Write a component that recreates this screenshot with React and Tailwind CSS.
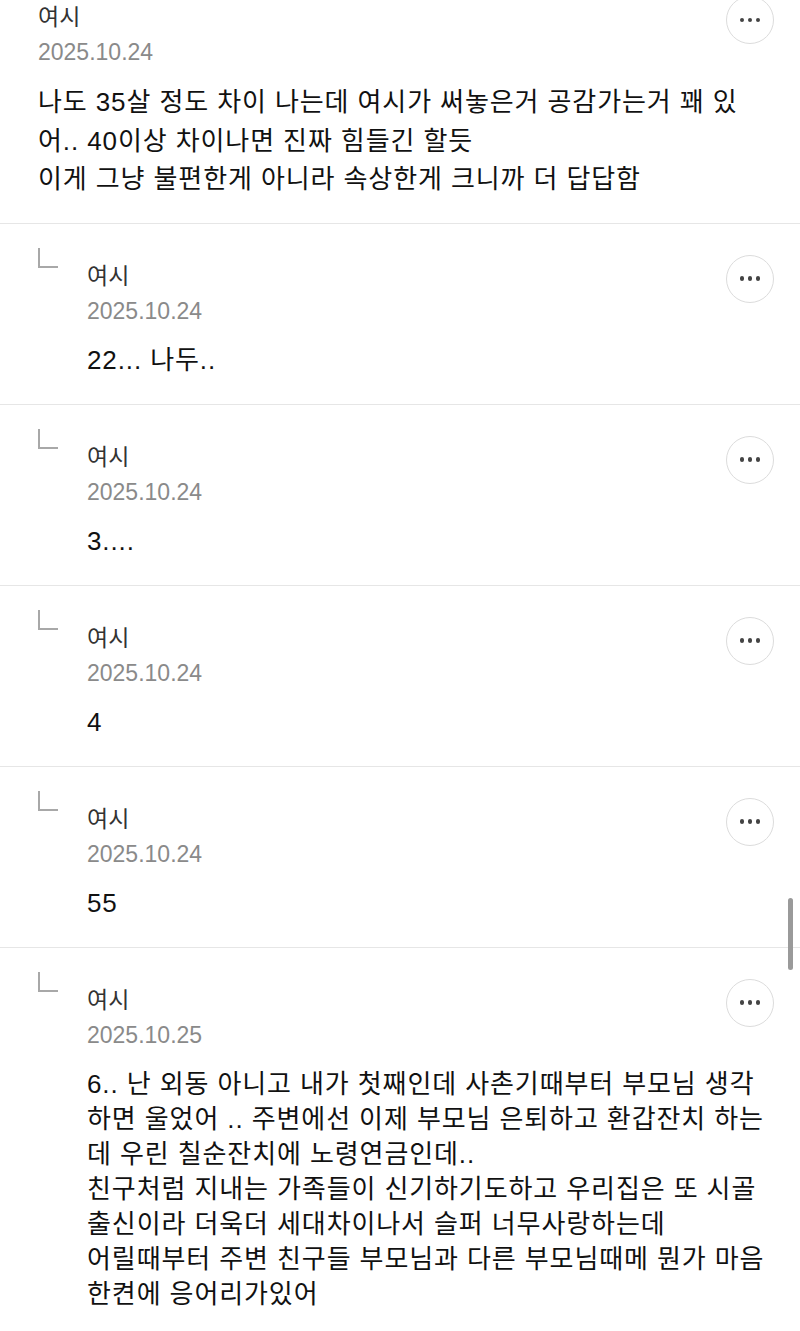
import React from 'react';

const comments = [
  {
    id: 1,
    reply: false,
    date: '2025.10.24',
    lines: [
      '나도 35살 정도 차이 나는데 여시가 써놓은거 공감가는거 꽤 있',
      '어.. 40이상 차이나면 진짜 힘들긴 할듯',
      '이게 그냥 불편한게 아니라 속상한게 크니까 더 답답함',
    ],
  },
  { id: 2, reply: true, date: '2025.10.24', lines: ['22... 나두..'] },
  { id: 3, reply: true, date: '2025.10.24', lines: ['3....'] },
  { id: 4, reply: true, date: '2025.10.24', lines: ['4'] },
  { id: 5, reply: true, date: '2025.10.24', lines: ['55'] },
  {
    id: 6,
    reply: true,
    date: '2025.10.25',
    lines: [
      '6.. 난 외동 아니고 내가 첫째인데 사촌기때부터 부모님 생각',
      '하면 울었어 .. 주변에선 이제 부모님 은퇴하고 환갑잔치 하는',
      '데 우린 칠순잔치에 노령연금인데..',
      '친구처럼 지내는 가족들이 신기하기도하고 우리집은 또 시골',
      '출신이라 더욱더 세대차이나서 슬퍼 너무사랑하는데',
      '어릴때부터 주변 친구들 부모님과 다른 부모님때메 뭔가 마음',
      '한켠에 응어리가있어',
    ],
  },
];

function MoreButton() {
  return (
    <button
      type="button"
      className="w-[48px] h-[48px] shrink-0 rounded-full border border-[#dcdcdc] bg-white flex items-center justify-center gap-[3.5px]"
    >
      <span className="w-[4.5px] h-[4.5px] rounded-full bg-[#444]" />
      <span className="w-[4.5px] h-[4.5px] rounded-full bg-[#444]" />
      <span className="w-[4.5px] h-[4.5px] rounded-full bg-[#444]" />
    </button>
  );
}

function ReplyMark() {
  return (
    <div className="w-[49px] shrink-0">
      <div className="w-[20px] h-[20px] border-l-2 border-b-2 border-[#a8a8a8]" />
    </div>
  );
}

function Comment({ c }) {
  return (
    <div
      className={
        c.reply
          ? 'flex pl-[38px] pr-[26px] pt-[24px] pb-[26px] border-t border-[#e6e6e6]'
          : 'flex pl-[38px] pr-[26px] pt-0 pb-[24px]'
      }
    >
      {c.reply && <ReplyMark />}
      <div className={c.reply ? 'flex-1 min-w-0 pt-[11px]' : 'flex-1 min-w-0'}>
        <div className="flex justify-between items-start">
          <div>
            <div className="text-[23px] leading-[35px] text-[#333]">여시</div>
            <div className="text-[23px] leading-[35px] text-[#8a8a8a]">{c.date}</div>
          </div>
          <div className="-mt-[4px]">
            <MoreButton />
          </div>
        </div>
        <p
          className={
            c.reply
              ? 'mt-[14px] text-[26px] tracking-[0.9px] leading-[35px] text-[#111] whitespace-nowrap'
              : 'mt-[13px] text-[26px] tracking-[0.9px] leading-[38.5px] text-[#111] whitespace-nowrap'
          }
        >
          {c.lines.map((line, i) => (
            <React.Fragment key={i}>
              {line}
              {i < c.lines.length - 1 && <br />}
            </React.Fragment>
          ))}
        </p>
      </div>
    </div>
  );
}

export default function App() {
  return (
    <div
      className="relative w-[800px] h-[1331px] overflow-hidden bg-white"
      style={{ fontFamily: '"Liberation Sans", "Noto Sans CJK KR", sans-serif' }}
    >
      {comments.map((c) => (
        <Comment key={c.id} c={c} />
      ))}

      {/* scroll indicator */}
      <div className="absolute left-[788px] top-[898px] w-[5px] h-[72px] rounded-full bg-[#9a9a9a]" />
    </div>
  );
}
